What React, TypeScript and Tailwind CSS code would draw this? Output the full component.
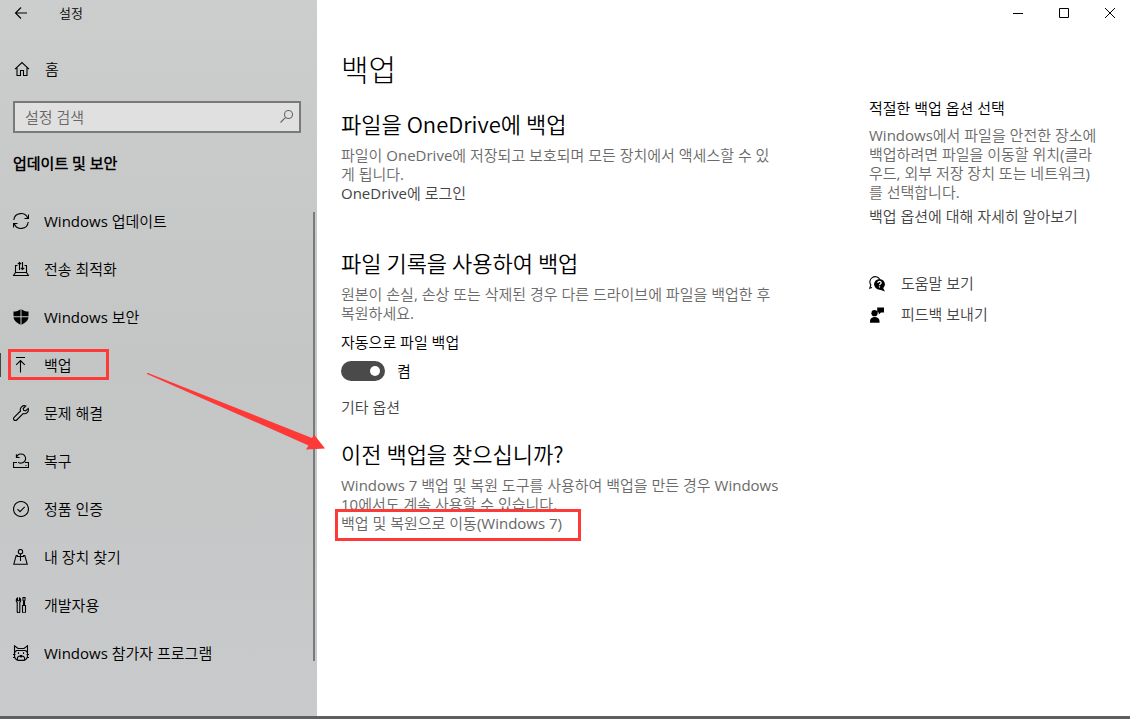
import { useState } from 'react'
import type { ReactNode } from 'react'

// ---- Icons (16x16 grid, thin strokes) ----

const ICONS: Record<string, ReactNode> = {
  back: <path d="M14 8H2.5M8 2.5L2.5 8L8 13.5" />,
  home: <path d="M1 8.2L8 1.6L15 8.2M3 6.8V14.5H6.5V9.5H9.5V14.5H13V6.8" />,
  update: (
    <path d="M.8 7A7.2 7.2 0 0 1 14.8 5.5M15.5 1.5V5.5H11.5M15.2 9A7.2 7.2 0 0 1 1.2 10.5M.5 14.5V10.5H4.5" />
  ),
  delivery: (
    <path d="M4.5 4.5H2.5V11.5M11.5 4.5H13.5V11.5M2.5 11.5H13.5L15.5 14.5H.5ZM6.5 9V1.5M4.8 3.2L6.5 1.5L8.2 3.2M9.5 1V8.5M7.8 6.8L9.5 8.5L11.2 6.8" />
  ),
  shield: (
    <g fill="currentColor" stroke="none">
      <path d="M7.5 .3V7.2H.5V2.6C3.5 2.6 5.5 1.8 7.5 .3Z" />
      <path d="M8.5 .3V7.2H15.5V2.6C12.5 2.6 10.5 1.8 8.5 .3Z" />
      <path d="M.5 8.2H7.5V15.7C4 13.9 1 11.8 .5 8.2Z" />
      <path d="M15.5 8.2H8.5V15.7C12 13.9 15 11.8 15.5 8.2Z" />
    </g>
  ),
  backup: <path d="M3 .5H12M7.5 15.5V3.5M3.2 7.8L7.5 3.5L11.8 7.8" />,
  wrench: (
    <path d="M12.8 .9A4.1 4.1 0 0 0 7.5 6L1.1 12.4A1.8 1.8 0 0 0 3.7 15L10.1 8.6A4.1 4.1 0 0 0 15.2 3.4L12.6 6L10.6 5.4L10.2 3.5Z" />
  ),
  recovery: (
    <>
      <path d="M4 9.5H.5V14.5H15.5V9.5H12M12.5 12.5H13.5" />
      <path d="M5.2 9.2A4.6 4.6 0 1 0 3.6 4.2M3.4 1.3V4.5H6.6" />
    </>
  ),
  activation: (
    <>
      <circle cx="8" cy="8" r="7.5" />
      <path d="M4.5 8.2L7 10.7L11.7 5.8" />
    </>
  ),
  device: (
    <>
      <circle cx="7.5" cy="2.7" r="2.2" />
      <path d="M7.5 4.9V12M3.9 7.5H11.1M5 6.5H3.2L.8 15.2H14.2L11.8 6.5H10" />
    </>
  ),
  developer: (
    <>
      <path d="M4.5 1V3.8H6.5V1C8 1.8 8.2 4.4 6.8 5.4V14.5A1.3 1.3 0 0 1 4.2 14.5V5.4C2.8 4.4 3 1.8 4.5 1Z" />
      <path d="M10 .5H12V3L11.5 4V8.5H10.5V4L10 3ZM9.5 8.5H12.5V14.5A1.5 1.5 0 0 1 9.5 14.5Z" />
    </>
  ),
  insider: (
    <>
      <path d="M1.5 8V.8L5 3.5H11L14.5 .8V8M3.5 5.5H12.5M1.5 7.5L3.5 5.5M14.5 7.5L12.5 5.5M1.5 8V11C1.5 13.8 4 15.4 6 15.4H10C12 15.4 14.5 13.8 14.5 11V8M0 9.5H2.5M0 12.5H2.5M13.5 9.5H16M13.5 12.5H16" />
      <path d="M5.5 7.2V9M10.5 7.2V9M7 10.5H9M8 10.5V12M4.5 15C3.6 11 6.5 10.5 8 12C9.5 10.5 12.4 11 11.5 15" />
    </>
  ),
  search: (
    <>
      <circle cx="9.5" cy="5.5" r="4" />
      <path d="M6.6 8.4L1.5 13.5" />
    </>
  ),
  help: (
    <>
      <path d="M3 11.5L.8 12.2L1.8 9A5 5 0 1 1 10.6 3" />
      <circle cx="10.5" cy="8.3" r="5.4" fill="currentColor" stroke="none" />
      <path d="M13.5 11L16 15.4L10.5 13.5Z" fill="currentColor" stroke="none" />
      <path d="M8.9 7C8.9 4.7 12.2 4.9 12.1 6.9C12 8.1 10.5 7.9 10.5 9.3M10.5 10.3V11.4" stroke="#fff" strokeWidth="1.2" />
    </>
  ),
  feedback: (
    <g fill="currentColor" stroke="none">
      <circle cx="5.5" cy="6.2" r="3.1" />
      <path d="M1 15.8V14C1 8.8 10.5 8.8 10.5 14V15.8Z" />
      <path d="M8.2 .5H15V5.5H12L9.8 7.5V5.5H8.2Z" />
    </g>
  ),
}

function Icon({ k }: { k: string }) {
  return (
    <svg className="w-4 h-4 shrink-0" viewBox="0 0 16 16" fill="none" stroke="currentColor" strokeWidth={1.1} aria-hidden="true">
      {ICONS[k]}
    </svg>
  )
}

// ---- Navigation ----

const NAV_ITEMS = [
  { key: 'update', label: 'Windows 업데이트' },
  { key: 'delivery', label: '전송 최적화' },
  { key: 'shield', label: 'Windows 보안' },
  { key: 'backup', label: '백업' },
  { key: 'wrench', label: '문제 해결' },
  { key: 'recovery', label: '복구' },
  { key: 'activation', label: '정품 인증' },
  { key: 'device', label: '내 장치 찾기' },
  { key: 'developer', label: '개발자용' },
  { key: 'insider', label: 'Windows 참가자 프로그램' },
]

function Sidebar() {
  const [query, setQuery] = useState('')

  return (
    <aside className="w-[317px] shrink-0 flex flex-col bg-linear-to-b from-[#cccdcd] via-[#c4c5c5] to-[#c9cacb]">
      <div className="h-[26px] pl-[13px] flex items-center gap-[30px]">
        <button aria-label="뒤로"><Icon k="back" /></button>
        <span className="text-[13px]">설정</span>
      </div>
      <a href="#home" className="mt-[27px] h-8 pl-[14px] flex items-center gap-[15px]">
        <Icon k="home" />
        홈
      </a>
      <label className="mt-4 ml-[13px] mr-4 h-8 pl-[10px] pr-1 flex items-center border-2 border-[#7a7a7a] bg-[#e0e0e0] text-[#666]">
        <input
          type="text"
          aria-label="설정 검색"
          value={query}
          onChange={(e) => setQuery(e.target.value)}
          placeholder="설정 검색"
          className="flex-1 min-w-0 h-[19px] bg-transparent outline-none placeholder:text-[#666]"
        />
        <Icon k="search" />
      </label>
      <h2 className="mt-4 ml-[13px] h-7 leading-7 font-bold">업데이트 및 보안</h2>

      <div className="mt-5 flex">
        <nav className="flex-1">
          {NAV_ITEMS.map(({ key, label }) => (
            <a key={key} href={`#${key}`} className="relative h-12 pl-[13px] flex items-center gap-[15px]">
              {key === 'backup' && (
                <>
                  <span className="absolute left-0 top-3 w-px h-6 bg-[#444]" />
                  <span className="absolute left-2 top-2 w-[101px] h-[31px] border-3 border-[#fd3a37]" />
                </>
              )}
              <Icon k={key} />
              {label}
            </a>
          ))}
        </nav>
        <div className="w-0.5 mt-[15px] mb-4 mr-0.5 bg-[#7a7a7a]" />
      </div>
    </aside>
  )
}

// ---- Backup page ----

function WindowControls() {
  return (
    <div className="h-[26px] pr-[15px] flex items-center justify-end gap-9">
      <button aria-label="최소화">
        <svg className="w-[10px] h-[10px]" viewBox="0 0 10 10" stroke="#000"><path d="M0 5.5H10" /></svg>
      </button>
      <button aria-label="최대화">
        <svg className="w-[10px] h-[10px]" viewBox="0 0 10 10" fill="none" stroke="#000"><path d="M.5 .5H9.5V9.5H.5Z" /></svg>
      </button>
      <button aria-label="닫기">
        <svg className="w-[10px] h-[10px]" viewBox="0 0 10 10" stroke="#000"><path d="M0 0L10 10M10 0L0 10" /></svg>
      </button>
    </div>
  )
}

function SectionTitle({ children }: { children: ReactNode }) {
  return (
    <h2 className="text-[22px] leading-7 font-['Noto_Sans_CJK_KR_DemiLight','Noto_Sans_CJK_KR',sans-serif]">
      {children}
    </h2>
  )
}

function BackupSettings() {
  const [enabled, setEnabled] = useState(true)

  return (
    <div className="flex-1 min-w-0">
      <h1 className="h-10 text-[30px] leading-10 font-light font-['Noto_Sans_CJK_KR',sans-serif]">백업</h1>

      <section className="mt-[21px]">
        <SectionTitle>파일을 OneDrive에 백업</SectionTitle>
        <p className="mt-[9px] text-[#6a6a6a]">
          파일이 OneDrive에 저장되고 보호되며 모든 장치에서 액세스할 수 있<br />게 됩니다.
        </p>
        <a href="#onedrive" className="block text-[#444]">OneDrive에 로그인</a>
      </section>

      <section className="mt-[45px]">
        <SectionTitle>파일 기록을 사용하여 백업</SectionTitle>
        <p className="mt-[9px] text-[#6a6a6a]">
          원본이 손실, 손상 또는 삭제된 경우 다른 드라이브에 파일을 백업한 후<br />복원하세요.
        </p>
        <label htmlFor="auto-backup" className="mt-[10px] block">자동으로 파일 백업</label>
        <div className="mt-[9px] h-5 flex items-center gap-3">
          <input
            id="auto-backup"
            type="checkbox"
            role="switch"
            checked={enabled}
            onChange={(e) => setEnabled(e.target.checked)}
            className="appearance-none w-11 h-5 px-[5px] rounded-full bg-[#4a4a4a] flex items-center before:w-[10px] before:h-[10px] before:rounded-full before:bg-white checked:justify-end"
          />
          <span>{enabled ? '켬' : '끔'}</span>
        </div>
        <a href="#more" className="mt-[17px] block text-[#444]">기타 옵션</a>
      </section>

      <section className="mt-[22px]">
        <SectionTitle>이전 백업을 찾으십니까?</SectionTitle>
        <p className="mt-[9px] text-[#6a6a6a]">
          Windows 7 백업 및 복원 도구를 사용하여 백업을 만든 경우 Windows<br />10에서도 계속 사용할 수 있습니다.
        </p>
        <a href="#restore" className="relative block text-[#666]">
          백업 및 복원으로 이동(Windows 7)
          <span className="absolute -left-1.5 -top-[5px] w-[246px] h-8 border-3 border-[#fd3a37]" />
        </a>
      </section>
    </div>
  )
}

function RelatedLinks() {
  return (
    <aside className="w-[237px] shrink-0 mt-[51px]">
      <h3>적절한 백업 옵션 선택</h3>
      <p className="mt-2 text-[#6a6a6a]">
        Windows에서 파일을 안전한 장소에<br />백업하려면 파일을 이동할 위치(클라<br />우드, 외부 저장 장치 또는 네트워크)<br />를 선택합니다.
      </p>
      <a href="#learn" className="mt-[5px] block text-[#444]">백업 옵션에 대해 자세히 알아보기</a>
      <div className="mt-12 flex flex-col gap-3">
        <a href="#help" className="flex items-center gap-4">
          <Icon k="help" />
          <span className="text-[#444]">도움말 보기</span>
        </a>
        <a href="#feedback" className="flex items-center gap-4">
          <Icon k="feedback" />
          <span className="text-[#444]">피드백 보내기</span>
        </a>
      </div>
    </aside>
  )
}

export default function App() {
  return (
    <div className="relative min-h-screen flex flex-col bg-white text-black text-[15px] leading-[19px] font-['Open_Sans','Noto_Sans_CJK_KR_DemiLight','Noto_Sans_CJK_KR',sans-serif]">
      <div className="flex-1 flex">
        <Sidebar />
        <main className="flex-1 min-w-0">
          <WindowControls />
          <div className="pt-[22px] pl-6 pr-6 flex gap-20">
            <BackupSettings />
            <RelatedLinks />
          </div>
        </main>
      </div>
      <div className="h-[3px] bg-[#5e5f5f]" />

      {/* Arrow pointing from the nav item to the restore section */}
      <svg className="absolute left-[147px] top-[373px] w-[178px] h-[77px] pointer-events-none" viewBox="0 0 178 77" fill="#fd3a37" aria-hidden="true">
        <path d="M0 0L1 0L165 65L167 61.5L178 75.5L159 76.5L161.5 72.5L0 1Z" />
      </svg>
    </div>
  )
}
